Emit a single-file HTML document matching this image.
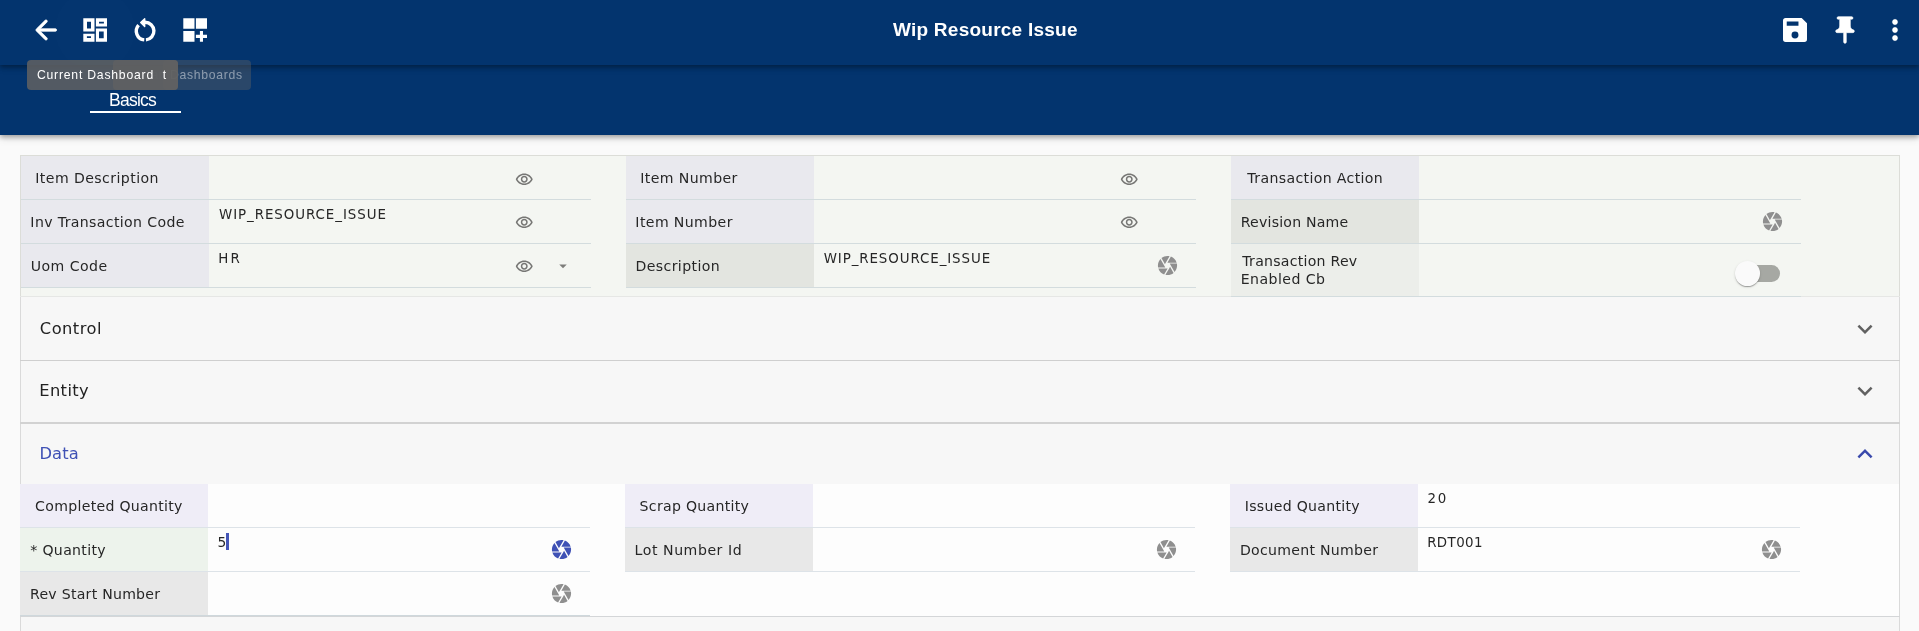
<!DOCTYPE html>
<html lang="en"><head><meta charset="utf-8"><title>Wip Resource Issue</title>
<style>
html,body{margin:0;padding:0}
body{width:1919px;height:631px;overflow:hidden;background:#fafafa;position:relative;font-family:"Liberation Sans",sans-serif;color:#212121}
.abs,.ic,.lbl,.val,.ln,.cell{position:absolute}
.ic{display:block}
.ln{z-index:2}
#hdr{left:0;top:0;width:1919px;height:134.5px;background:#03346e;box-shadow:0 2px 5px rgba(0,0,0,.32),0 4px 8px rgba(0,0,0,.10)}
#tb{left:0;top:0;width:1919px;height:65px;background:#03346e;box-shadow:0 2px 4px rgba(0,0,0,.28),0 4px 6px rgba(0,0,0,.12)}
#title{top:17.2px;height:26px;line-height:26px;color:#fff;font-weight:bold;font-size:19px;letter-spacing:.35px;white-space:nowrap}
.tip{height:30px;border-radius:4px;box-sizing:border-box}
.tipt{top:60.3px;height:30px;line-height:30px;color:#fff;font-size:12.2px;white-space:nowrap}
#tab{top:89px;height:22px;line-height:22px;white-space:nowrap;color:#fff;font-size:17.5px;letter-spacing:-.55px}
#tabln{left:90px;top:110.8px;width:91px;height:2.3px;background:#fff}
.lbl{font-family:"DejaVu Sans","Liberation Sans",sans-serif;font-size:14.1px;letter-spacing:.62px;color:#262626;white-space:nowrap;line-height:18px}
.val{font-family:"DejaVu Sans","Liberation Sans",sans-serif;font-size:13.4px;letter-spacing:.2px;color:#262626;white-space:nowrap;line-height:16px}
.acc{font-family:"DejaVu Sans","Liberation Sans",sans-serif;font-size:16.3px;letter-spacing:.3px;color:#222;line-height:20px;white-space:nowrap}
</style></head><body><div id="root" style="position:absolute;left:0;top:0;width:1919px;height:631px;overflow:hidden;will-change:transform">

<header>
<div id="hdr" class="abs"></div><div id="tb" class="abs"></div>
<div class="abs" style="left:55px;top:-10px;width:80px;height:80px;border-radius:50%;background:rgba(255,255,255,.008)"></div>
<svg class="ic" style="left:29.80px;top:14.00px;width:32px;height:32px" viewBox="0 0 24 24" fill="#fff" stroke="#fff" stroke-width=".5" stroke-linejoin="round"><path d="M19 11H7.83l4.88-4.88c.39-.39.39-1.030 0-1.420-.39-.39-1.020-.39-1.410 0l-6.590 6.590c-.39.39-.39 1.020 0 1.410l6.590 6.590c.39.39 1.020.39 1.410 0 .39-.39.39-1.020 0-1.410L7.830 13H19c.55 0 1-.45 1-1s-.45-1-1-1z"/></svg>
<svg class="ic" style="left:80px;top:14px;width:32px;height:32px" viewBox="80 14 32 32" fill="#fff" fill-rule="evenodd"><path d="M83.3 18.3h11.2v13.1H83.3zM87 21.7v6.800h4v-6.800z M95.900 18.3H107v8.200H95.900zM99 21.700v1.700h4.900v-1.700z M83.300 33.700h11.200v8H83.300zM86.900 36.300v1.700h4.100v-1.700z M95.900 28.500H107v13.200H95.900zM99 31.400v6.800h4.700v-6.800z"/></svg>
<svg class="ic" style="left:129px;top:14px;width:32px;height:32px" viewBox="129 14 32 32" fill="none" stroke="#fff" stroke-width="3.4"><path d="M144.6 22.300h.5a8.800 8.800 0 0 1 .85 17.560M144.250 39.860a8.800 8.800 0 0 1-5.650-14.660"/><path d="M144.700 18.800l-4 3.600 4 4z" fill="#fff" stroke-width="1.400" stroke-linejoin="round"/></svg>
<svg class="ic" style="left:180px;top:14px;width:32px;height:32px" viewBox="180 14 32 32" fill="#fff"><path d="M183.3 18.3h11.2v10.500h-11.200zM195.900 18.300H207v10.500h-11.100zM183.300 31.100h11.200v10.600h-11.200zM199.900 31.100h3.100v3.700h4v3.200h-4v3.700h-3.100v-3.700h-4v-3.200h4z"/></svg>
<div id="title" class="abs" style="left:892.96px;letter-spacing:0.243px">Wip Resource Issue</div>
<svg class="ic" style="left:1779.10px;top:13.80px;width:32px;height:32px" viewBox="0 0 24 24" fill="#fff" fill-rule="evenodd"><path d="M5 3h12l4 4v12a2 2 0 0 1-2 2H5a2 2 0 0 1-2-2V5a2 2 0 0 1 2-2z M5.800 5.700h8.800v3.200H5.800z M12 13.200a2.600 2.600 0 1 0 0 5.200a2.600 2.600 0 1 0 0-5.200z"/></svg>
<svg class="ic" style="left:1829.10px;top:14.20px;width:32px;height:32px" viewBox="0 0 24 24" fill="#fff" fill-rule="evenodd" stroke="#fff" stroke-width=".45"><path d="M19 12.87c0-.47-.34-.85-.8-.98C16.930 11.540 16 10.380 16 9V4h1c.55 0 1-.45 1-1s-.45-1-1-1H7c-.55 0-1 .45-1 1s.45 1 1 1h1v5c0 1.380-.93 2.540-2.200 2.890-.46.130-.8.510-.8.980V13c0 .550.45 1 1 1h4.980l.02 7c0 .550.45 1 1 1s1-.45 1-1l-.02-7H18c.55 0 1-.45 1-1v-.130z"/></svg>
<svg class="ic" style="left:1879.20px;top:14.00px;width:32px;height:32px" viewBox="0 0 24 24" fill="#fff" stroke="#fff" stroke-width=".25"><path d="M12 8c1.100 0 2-.9 2-2s-.9-2-2-2-2 .9-2 2 .9 2 2 2zm0 2c-1.100 0-2 .9-2 2s.9 2 2 2 2-.9 2-2-.9-2-2-2zm0 6c-1.100 0-2 .9-2 2s.9 2 2 2 2-.9 2-2-.9-2-2-2z"/></svg>
<div role="tooltip">
<div class="tip abs" style="left:162.5px;top:60px;width:88.5px;background:rgba(97,97,97,.42)"></div>
<div class="tipt abs" id="tip3" style="left:170.00px;letter-spacing:0.720px;color:rgba(255,255,255,.46)">Dashboards</div>
<div class="tip abs" style="left:112.5px;top:60px;width:65.5px;background:rgba(97,97,97,.7)"></div>
<div class="tipt abs" style="left:124px;letter-spacing:.6px;color:rgba(255,255,255,.10)">Restar</div>
<div class="tip abs" style="left:27px;top:60px;width:151px;background:rgba(97,97,97,.85)"></div>
<div class="tipt abs" id="tip1" style="left:36.89px;letter-spacing:0.792px">Current Dashboard</div>
<div class="tipt abs" style="left:162.7px">t</div>
</div><nav>
<div id="tab" class="abs" style="left:109.11px;letter-spacing:-0.764px">Basics</div><div id="tabln" class="abs"></div>
</nav></header><main><section>
<div class="abs" style="left:20px;top:155px;width:1879.5px;height:141.5px;box-sizing:border-box;background:#f4f6f2;border:1px solid #dcddd8"></div>
<div class="cell" style="left:21px;top:155.5px;width:187.5px;height:44px;background:#e9e9ee"></div>
<div class="ln" style="left:21px;top:198.80px;width:570px;height:1.3px;background:#d3dcde"></div>
<div class="lbl" id="L1" style="left:35.27px;top:168.80px;letter-spacing:0.424px">Item Description</div>
<div class="cell" style="left:21px;top:199.5px;width:187.5px;height:44px;background:#e9e9ee"></div>
<div class="ln" style="left:21px;top:242.80px;width:570px;height:1.3px;background:#d3dcde"></div>
<div class="lbl" id="L2" style="left:30.36px;top:212.80px;letter-spacing:0.366px">Inv Transaction Code</div>
<div class="val" id="L2v" style="left:218.97px;top:206.90px;letter-spacing:0.940px">WIP_RESOURCE_ISSUE</div>
<div class="cell" style="left:21px;top:243.5px;width:187.5px;height:44px;background:#e9e9ee"></div>
<div class="ln" style="left:21px;top:286.80px;width:570px;height:1.3px;background:#d3dcde"></div>
<div class="lbl" id="L3" style="left:30.66px;top:256.80px;letter-spacing:0.458px">Uom Code</div>
<div class="val" id="L3v" style="left:218.22px;top:250.90px;letter-spacing:2.295px">HR</div>
<div class="cell" style="left:626px;top:155.5px;width:187.5px;height:44px;background:#e9e9ee"></div>
<div class="ln" style="left:626px;top:198.80px;width:570px;height:1.3px;background:#d3dcde"></div>
<div class="lbl" id="L4" style="left:640.27px;top:168.80px;letter-spacing:0.397px">Item Number</div>
<div class="cell" style="left:626px;top:199.5px;width:187.5px;height:44px;background:#e9e9ee"></div>
<div class="ln" style="left:626px;top:242.80px;width:570px;height:1.3px;background:#d3dcde"></div>
<div class="lbl" id="L5" style="left:635.36px;top:212.80px;letter-spacing:0.389px">Item Number</div>
<div class="cell" style="left:626px;top:243.5px;width:187.5px;height:44px;background:#e3e5e0"></div>
<div class="ln" style="left:626px;top:286.80px;width:570px;height:1.3px;background:#d3dcde"></div>
<div class="lbl" id="L6" style="left:635.45px;top:256.80px;letter-spacing:0.401px">Description</div>
<div class="val" id="L6v" style="left:823.63px;top:250.90px;letter-spacing:0.916px">WIP_RESOURCE_ISSUE</div>
<div class="cell" style="left:1231px;top:155.5px;width:187.5px;height:44px;background:#e9e9ee"></div>
<div class="ln" style="left:1231px;top:198.80px;width:570px;height:1.3px;background:#d3dcde"></div>
<div class="lbl" id="L7" style="left:1247.35px;top:168.80px;letter-spacing:0.365px">Transaction Action</div>
<div class="cell" style="left:1231px;top:199.5px;width:187.5px;height:44px;background:#e3e5e0"></div>
<div class="ln" style="left:1231px;top:242.80px;width:570px;height:1.3px;background:#d3dcde"></div>
<div class="lbl" id="L8" style="left:1240.76px;top:212.80px;letter-spacing:0.207px">Revision Name</div>
<div class="cell" style="left:1231px;top:243.5px;width:187.5px;height:53.1px;background:#eceeea"></div>
<div class="ln" style="left:1231px;top:295.90px;width:570px;height:1.3px;background:#d3dcde"></div>
<div class="lbl" id="L9a" style="left:1242.32px;top:252.00px;letter-spacing:0.256px">Transaction Rev</div>
<div class="lbl" id="L9b" style="left:1240.75px;top:269.50px;letter-spacing:0.453px">Enabled Cb</div>
<svg class="ic" style="left:514.55px;top:169.60px;width:18.5px;height:18.5px" viewBox="0 0 24 24" fill="#777775" ><path d="M12 6.500c3.790 0 7.170 2.130 8.820 5.500-1.650 3.370-5.020 5.500-8.820 5.500S4.830 15.370 3.180 12C4.830 8.630 8.210 6.500 12 6.500m0-2C7 4.500 2.730 7.610 1 12c1.730 4.390 6 7.500 11 7.500s9.270-3.110 11-7.500c-1.730-4.390-6-7.500-11-7.500zm0 5c1.380 0 2.500 1.120 2.500 2.500s-1.120 2.500-2.500 2.500-2.500-1.120-2.500-2.500 1.120-2.500 2.500-2.500m0-2c-2.480 0-4.500 2.020-4.500 4.500s2.020 4.500 4.500 4.500 4.500-2.020 4.500-4.500-2.020-4.500-4.500-4.500z"/></svg>
<svg class="ic" style="left:514.55px;top:212.60px;width:18.5px;height:18.5px" viewBox="0 0 24 24" fill="#777775" ><path d="M12 6.500c3.790 0 7.170 2.130 8.820 5.500-1.650 3.370-5.020 5.500-8.820 5.500S4.830 15.370 3.180 12C4.830 8.630 8.210 6.500 12 6.500m0-2C7 4.500 2.730 7.610 1 12c1.730 4.390 6 7.500 11 7.500s9.270-3.110 11-7.500c-1.730-4.390-6-7.500-11-7.500zm0 5c1.380 0 2.500 1.120 2.500 2.500s-1.120 2.500-2.500 2.500-2.500-1.120-2.500-2.500 1.120-2.500 2.500-2.500m0-2c-2.480 0-4.500 2.020-4.500 4.500s2.020 4.500 4.500 4.500 4.500-2.020 4.500-4.500-2.020-4.500-4.500-4.500z"/></svg>
<svg class="ic" style="left:514.55px;top:256.60px;width:18.5px;height:18.5px" viewBox="0 0 24 24" fill="#777775" ><path d="M12 6.500c3.790 0 7.170 2.130 8.820 5.500-1.650 3.370-5.020 5.500-8.820 5.500S4.830 15.370 3.180 12C4.830 8.630 8.210 6.500 12 6.500m0-2C7 4.500 2.730 7.610 1 12c1.730 4.390 6 7.500 11 7.500s9.270-3.110 11-7.500c-1.730-4.390-6-7.500-11-7.500zm0 5c1.380 0 2.500 1.120 2.500 2.500s-1.120 2.500-2.500 2.500-2.500-1.120-2.500-2.500 1.120-2.500 2.500-2.500m0-2c-2.480 0-4.500 2.020-4.500 4.500s2.020 4.500 4.500 4.500 4.500-2.020 4.500-4.500-2.020-4.500-4.500-4.500z"/></svg>
<svg class="ic" style="left:1119.55px;top:169.60px;width:18.5px;height:18.5px" viewBox="0 0 24 24" fill="#777775" ><path d="M12 6.500c3.790 0 7.170 2.130 8.820 5.500-1.650 3.370-5.020 5.500-8.820 5.500S4.830 15.370 3.180 12C4.830 8.630 8.210 6.500 12 6.500m0-2C7 4.500 2.730 7.610 1 12c1.730 4.390 6 7.500 11 7.500s9.270-3.110 11-7.500c-1.730-4.390-6-7.500-11-7.500zm0 5c1.380 0 2.500 1.120 2.500 2.500s-1.120 2.500-2.500 2.500-2.500-1.120-2.500-2.500 1.120-2.500 2.500-2.500m0-2c-2.480 0-4.500 2.020-4.500 4.500s2.020 4.500 4.500 4.500 4.500-2.020 4.500-4.500-2.020-4.500-4.500-4.500z"/></svg>
<svg class="ic" style="left:1119.55px;top:212.60px;width:18.5px;height:18.5px" viewBox="0 0 24 24" fill="#777775" ><path d="M12 6.500c3.790 0 7.170 2.130 8.820 5.500-1.650 3.370-5.020 5.500-8.820 5.500S4.830 15.370 3.180 12C4.830 8.630 8.210 6.500 12 6.500m0-2C7 4.500 2.730 7.610 1 12c1.730 4.390 6 7.500 11 7.500s9.270-3.110 11-7.500c-1.730-4.390-6-7.500-11-7.500zm0 5c1.380 0 2.500 1.120 2.500 2.500s-1.120 2.500-2.500 2.500-2.500-1.120-2.500-2.500 1.120-2.500 2.500-2.500m0-2c-2.480 0-4.500 2.020-4.500 4.500s2.020 4.500 4.500 4.500 4.500-2.020 4.500-4.500-2.020-4.500-4.500-4.500z"/></svg>
<svg class="ic" style="left:553.70px;top:257.00px;width:18px;height:18px" viewBox="0 0 24 24" fill="#7d7d7b" ><path d="M7 10l5 5 5-5z"/></svg>
<svg class="ic" style="left:1155.80px;top:254.20px;width:23px;height:23px" viewBox="0 0 24 24" fill="#8f8f8f" ><path d="M9.4 10.5l4.77-8.26C13.47 2.09 12.75 2 12 2c-2.4 0-4.6.85-6.32 2.25l3.66 6.35.06-.1zM21.54 9c-.92-2.92-3.15-5.26-6-6.34L11.88 9h9.66zm.26 1h-7.49l.29.5 4.76 8.25C21 16.970 22 14.610 22 12c0-.69-.07-1.35-.2-2zM8.54 12l-3.9-6.75C3.010 7.030 2 9.390 2 12c0 .69.07 1.350.2 2h7.490l-1.150-2zm-6.080 3c.92 2.920 3.150 5.260 6 6.340L12.120 15H2.460zm11.270 0l-3.900 6.760c.7.150 1.420.24 2.170.24 2.400 0 4.600-.85 6.320-2.250l-3.660-6.350-.930 1.600z"/></svg>
<svg class="ic" style="left:1760.80px;top:210.20px;width:23px;height:23px" viewBox="0 0 24 24" fill="#8f8f8f" ><path d="M9.4 10.5l4.77-8.26C13.47 2.09 12.75 2 12 2c-2.4 0-4.6.85-6.32 2.25l3.66 6.35.06-.1zM21.54 9c-.92-2.92-3.15-5.26-6-6.34L11.88 9h9.66zm.26 1h-7.49l.29.5 4.76 8.25C21 16.970 22 14.610 22 12c0-.69-.07-1.35-.2-2zM8.54 12l-3.9-6.75C3.010 7.030 2 9.390 2 12c0 .69.07 1.350.2 2h7.490l-1.150-2zm-6.080 3c.92 2.920 3.150 5.260 6 6.340L12.120 15H2.460zm11.270 0l-3.900 6.760c.7.150 1.420.24 2.170.24 2.400 0 4.600-.85 6.320-2.250l-3.660-6.350-.930 1.600z"/></svg>
<div class="abs" style="left:1737px;top:265px;width:43px;height:17px;border-radius:9px;background:#a6a8a3"></div>
<div class="abs" style="left:1735px;top:261px;width:24.7px;height:24.7px;border-radius:50%;background:#fafafa;box-shadow:0 2px 1px -1px rgba(0,0,0,.2),0 1px 1px 0 rgba(0,0,0,.14),0 1px 3px 0 rgba(0,0,0,.12)"></div>
</section><section>
<div class="abs" style="left:20px;top:296.5px;width:1879.5px;height:340px;box-sizing:border-box;background:#f7f7f7;border-left:1px solid #dadada;border-right:1px solid #dadada"></div>
<div class="abs" style="left:20px;top:296.2px;width:1879.5px;height:1.2px;background:#e6e7e5"></div>
<div class="ln" style="left:20px;top:359.8px;width:1879.5px;height:1.2px;background:#cfcfcf"></div>
<div class="ln" style="left:20px;top:421.8px;width:1879.5px;height:2px;background:#d2d2d2"></div>
<div class="acc abs" id="acc1" style="left:39.80px;top:319.1px;letter-spacing:0.464px">Control</div>
<div class="acc abs" id="acc2" style="left:39.26px;top:381.2px;letter-spacing:0.379px">Entity</div>
<div class="acc abs" id="acc3" style="left:39.40px;top:444px;color:#3f51b5;letter-spacing:0.176px">Data</div>
<svg class="ic" style="left:1850.00px;top:314.30px;width:30px;height:30px" viewBox="0 0 24 24" fill="#616161" ><path d="M16.59 8.59L12 13.17 7.41 8.59 6 10l6 6 6-6z"/></svg>
<svg class="ic" style="left:1850.00px;top:375.60px;width:30px;height:30px" viewBox="0 0 24 24" fill="#616161" ><path d="M16.59 8.59L12 13.17 7.41 8.59 6 10l6 6 6-6z"/></svg>
<svg class="ic" style="left:1850.00px;top:438.90px;width:30px;height:30px" viewBox="0 0 24 24" fill="#3949ab" ><path d="M12 8l-6 6 1.41 1.41L12 10.83l4.59 4.580L18 14z"/></svg>
<div>
<div class="abs" style="left:20px;top:484.3px;width:1879px;height:131.7px;background:#fdfdfd"></div>
<div class="ln" style="left:20px;top:615.8px;width:1879.5px;height:1.4px;background:#d4d6d8"></div>
<div class="cell" style="left:20.3px;top:484.3px;width:187.3px;height:43.5px;background:#efedf7"></div>
<div class="ln" style="left:20.3px;top:527.10px;width:570px;height:1.3px;background:#dde3e8"></div>
<div class="lbl" id="L10" style="left:35.10px;top:497.35px;letter-spacing:0.301px">Completed Quantity</div>
<div class="cell" style="left:20.3px;top:527.5px;width:187.3px;height:43.8px;background:#edf3ec"></div>
<div class="ln" style="left:20.3px;top:570.60px;width:570px;height:1.3px;background:#dde3e8"></div>
<div class="lbl" id="L11" style="left:30.29px;top:540.70px;letter-spacing:0.324px">* Quantity</div>
<div class="val" id="L11v" style="left:217.59px;top:534.10px;letter-spacing:0.000px;font-size:13.8px">5</div>
<div class="cell" style="left:20.3px;top:571.3px;width:187.3px;height:44.5px;background:#e8e8e8"></div>
<div class="ln" style="left:20.3px;top:615.10px;width:570px;height:1.3px;background:#cfd8dc"></div>
<div class="lbl" id="L12" style="left:30.03px;top:584.85px;letter-spacing:0.257px">Rev Start Number</div>
<div class="cell" style="left:625px;top:484.3px;width:187.5px;height:43.5px;background:#efedf7"></div>
<div class="ln" style="left:625px;top:527.10px;width:570px;height:1.3px;background:#dde3e8"></div>
<div class="lbl" id="L13" style="left:639.61px;top:497.35px;letter-spacing:0.295px">Scrap Quantity</div>
<div class="cell" style="left:625px;top:527.5px;width:187.5px;height:43.8px;background:#e8e8e8"></div>
<div class="ln" style="left:625px;top:570.60px;width:570px;height:1.3px;background:#dde3e8"></div>
<div class="lbl" id="L14" style="left:634.62px;top:540.70px;letter-spacing:0.551px">Lot Number Id</div>
<div class="cell" style="left:1230px;top:484.3px;width:187.5px;height:43.5px;background:#efedf7"></div>
<div class="ln" style="left:1230px;top:527.10px;width:570px;height:1.3px;background:#dde3e8"></div>
<div class="lbl" id="L15" style="left:1244.71px;top:497.35px;letter-spacing:0.301px">Issued Quantity</div>
<div class="val" id="L15v" style="left:1427.42px;top:491.10px;letter-spacing:1.881px">20</div>
<div class="cell" style="left:1230px;top:527.5px;width:187.5px;height:43.8px;background:#e8e8e8"></div>
<div class="ln" style="left:1230px;top:570.60px;width:570px;height:1.3px;background:#dde3e8"></div>
<div class="lbl" id="L16" style="left:1239.91px;top:540.70px;letter-spacing:0.293px">Document Number</div>
<div class="val" id="L16v" style="left:1427.14px;top:534.90px;letter-spacing:0.419px">RDT001</div>
<div class="abs" style="left:226.2px;top:533px;width:2.5px;height:17px;background:#4556b7"></div>
<svg class="ic" style="left:550.10px;top:538.00px;width:23px;height:23px" viewBox="0 0 24 24" fill="#3f51b5" ><path d="M9.4 10.5l4.77-8.26C13.47 2.09 12.75 2 12 2c-2.4 0-4.6.85-6.32 2.25l3.66 6.35.06-.1zM21.54 9c-.92-2.92-3.15-5.26-6-6.34L11.88 9h9.66zm.26 1h-7.49l.29.5 4.76 8.25C21 16.970 22 14.610 22 12c0-.69-.07-1.35-.2-2zM8.54 12l-3.9-6.75C3.010 7.030 2 9.390 2 12c0 .69.07 1.350.2 2h7.490l-1.150-2zm-6.080 3c.92 2.920 3.150 5.260 6 6.340L12.120 15H2.460zm11.270 0l-3.900 6.760c.7.150 1.420.24 2.170.24 2.400 0 4.600-.85 6.320-2.250l-3.660-6.350-.930 1.600z"/></svg>
<svg class="ic" style="left:550.10px;top:582.00px;width:23px;height:23px" viewBox="0 0 24 24" fill="#8f8f8f" ><path d="M9.4 10.5l4.77-8.26C13.47 2.09 12.75 2 12 2c-2.4 0-4.6.85-6.32 2.25l3.66 6.35.06-.1zM21.54 9c-.92-2.92-3.15-5.26-6-6.34L11.88 9h9.66zm.26 1h-7.49l.29.5 4.76 8.25C21 16.970 22 14.610 22 12c0-.69-.07-1.35-.2-2zM8.54 12l-3.9-6.75C3.010 7.030 2 9.390 2 12c0 .69.07 1.350.2 2h7.490l-1.150-2zm-6.080 3c.92 2.920 3.150 5.260 6 6.340L12.120 15H2.460zm11.270 0l-3.900 6.760c.7.150 1.420.24 2.170.24 2.400 0 4.600-.85 6.320-2.250l-3.660-6.350-.930 1.600z"/></svg>
<svg class="ic" style="left:1155.00px;top:538.30px;width:23px;height:23px" viewBox="0 0 24 24" fill="#8f8f8f" ><path d="M9.4 10.5l4.77-8.26C13.47 2.09 12.75 2 12 2c-2.4 0-4.6.85-6.32 2.25l3.66 6.35.06-.1zM21.54 9c-.92-2.92-3.15-5.26-6-6.34L11.88 9h9.66zm.26 1h-7.49l.29.5 4.76 8.25C21 16.970 22 14.610 22 12c0-.69-.07-1.35-.2-2zM8.54 12l-3.9-6.75C3.010 7.030 2 9.390 2 12c0 .69.07 1.350.2 2h7.490l-1.150-2zm-6.080 3c.92 2.920 3.150 5.260 6 6.340L12.120 15H2.460zm11.270 0l-3.900 6.760c.7.150 1.420.24 2.170.24 2.400 0 4.600-.85 6.320-2.250l-3.660-6.350-.930 1.600z"/></svg>
<svg class="ic" style="left:1760.20px;top:538.30px;width:23px;height:23px" viewBox="0 0 24 24" fill="#8f8f8f" ><path d="M9.4 10.5l4.77-8.26C13.47 2.09 12.75 2 12 2c-2.4 0-4.6.85-6.32 2.25l3.66 6.35.06-.1zM21.54 9c-.92-2.92-3.15-5.26-6-6.34L11.88 9h9.66zm.26 1h-7.49l.29.5 4.76 8.25C21 16.970 22 14.610 22 12c0-.69-.07-1.35-.2-2zM8.54 12l-3.9-6.75C3.010 7.030 2 9.390 2 12c0 .69.07 1.350.2 2h7.490l-1.150-2zm-6.080 3c.92 2.920 3.150 5.260 6 6.340L12.120 15H2.460zm11.270 0l-3.900 6.760c.7.150 1.420.24 2.170.24 2.400 0 4.600-.85 6.320-2.250l-3.660-6.350-.930 1.600z"/></svg>
</div></section></main></div></body></html>
